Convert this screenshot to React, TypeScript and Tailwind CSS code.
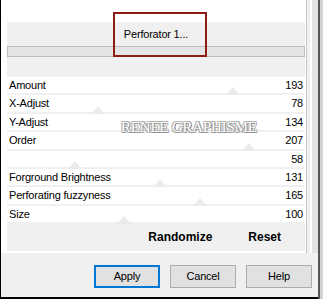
import React from "react";

const ROWS = [
  { label: "Amount", value: 193 },
  { label: "X-Adjust", value: 78 },
  { label: "Y-Adjust", value: 134 },
  { label: "Order", value: 207 },
  { label: "", value: 58 },
  { label: "Forground Brightness", value: 131 },
  { label: "Perforating fuzzyness", value: 165 },
  { label: "Size", value: 100 },
];

const TRACK = 298;

function Thumb({ value }: { value: number }) {
  // slider thumb: faint triangle at the bottom of the row
  const left = (value / 255) * TRACK - 7;
  return (
    <svg
      className="absolute bottom-[-2px]"
      style={{ left }}
      width="14"
      height="8"
      viewBox="0 0 14 8"
      aria-hidden="true"
    >
      <path d="M7 0L14 8H0Z" fill="#ebebeb" />
    </svg>
  );
}

function Button({ label, primary }: { label: string; primary?: boolean }) {
  return (
    <button
      type="button"
      className={
        primary
          ? "h-[23px] w-[66px] bg-[#e1e1e1] border-2 border-[#0078d7] text-[11px] tracking-[-0.2px] text-black"
          : "h-[23px] w-[66px] bg-[#e1e1e1] border border-[#adadad] text-[11px] tracking-[-0.2px] text-black"
      }
    >
      {label}
    </button>
  );
}

export default function App() {
  return (
    <div
      className="relative flex w-[323px] h-[299px] bg-[#f0f0f0] overflow-hidden text-black"
      style={{ fontFamily: '"Liberation Sans", Arial, sans-serif' }}
    >
      <div className="flex flex-col w-[318px] border-l border-b-2 border-black">
        {/* upper panel */}
        <div className="flex h-[253px]">
          <div className="w-[305px] bg-white pl-[6px] pt-[22px] pb-[2px]">
            <div className="w-[298px] h-full bg-[#f0f0f0] flex flex-col">
              <div className="h-[24px] flex items-center justify-center text-[11px] tracking-[-0.2px]">
                Perforator 1...
              </div>
              <div className="h-[11px] bg-[#e4e4e4] border border-[#bdbdbd]" />
              <div className="h-[20px]" />
              <div className="flex flex-col gap-[2px]">
                {ROWS.map((row, i) => (
                  <div
                    key={i}
                    className="relative h-[16.4px] bg-white flex items-center justify-between px-[2px] text-[11px] tracking-[-0.2px]"
                  >
                    <Thumb value={row.value} />
                    <span className="relative">{row.label}</span>
                    <span className="relative">{row.value}</span>
                  </div>
                ))}
              </div>
              <div className="flex-1 flex items-center justify-end pr-[24px] gap-[36px] text-[12px] font-bold">
                <span>Randomize</span>
                <span>Reset</span>
              </div>
            </div>
          </div>
          <div className="w-px bg-[#c8c8c8]" />
          <div className="w-[3px] bg-[#f0f0f0]" />
          <div className="w-[2px] bg-white" />
          <div className="flex-1 bg-[#e4e4e4]" />
        </div>

        {/* button bar */}
        <div className="flex-1 flex justify-end items-start pt-[12px] pr-[6px] gap-[10px]">
          <Button label="Apply" primary />
          <Button label="Cancel" />
          <Button label="Help" />
        </div>
      </div>
      <div className="w-[2px] bg-[#555555]" />
      <div className="flex-1 bg-[#d4d4d4]" />

      {/* watermark */}
      <div
        className="absolute left-[121px] top-[118px] text-[15px] leading-[19px] text-white tracking-[-0.2px] [text-shadow:1px_1px_0_#8c8c8c,-1px_-1px_0_#b4b4b4,1px_-1px_0_#a6a6a6,-1px_1px_0_#a6a6a6]"
        style={{ fontFamily: '"Liberation Serif", "Times New Roman", serif' }}
      >
        RENEE GRAPHISME
      </div>

      {/* red annotation box */}
      <div className="absolute left-[113px] top-[12px] w-[94px] h-[45px] border-2 border-[#8e1b14]" />
    </div>
  );
}
